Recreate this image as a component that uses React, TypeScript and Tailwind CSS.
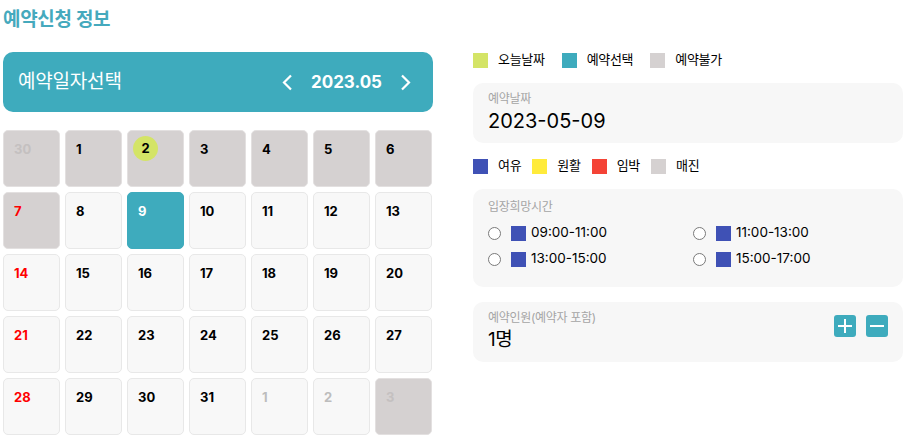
import React from "react";

type Cell = { n: number; kind: "dis" | "norm" | "sel" | "other" | "otherdis"; red?: boolean; today?: boolean };

const rows: Cell[][] = [
  [
    { n: 30, kind: "otherdis" },
    { n: 1, kind: "dis" },
    { n: 2, kind: "dis", today: true },
    { n: 3, kind: "dis" },
    { n: 4, kind: "dis" },
    { n: 5, kind: "dis" },
    { n: 6, kind: "dis" },
  ],
  [
    { n: 7, kind: "dis", red: true },
    { n: 8, kind: "norm" },
    { n: 9, kind: "sel" },
    { n: 10, kind: "norm" },
    { n: 11, kind: "norm" },
    { n: 12, kind: "norm" },
    { n: 13, kind: "norm" },
  ],
  [14, 15, 16, 17, 18, 19, 20].map((n, i) => ({ n, kind: "norm" as const, red: i === 0 })),
  [21, 22, 23, 24, 25, 26, 27].map((n, i) => ({ n, kind: "norm" as const, red: i === 0 })),
  [
    { n: 28, kind: "norm", red: true },
    { n: 29, kind: "norm" },
    { n: 30, kind: "norm" },
    { n: 31, kind: "norm" },
    { n: 1, kind: "other" },
    { n: 2, kind: "other" },
    { n: 3, kind: "otherdis" },
  ],
];

const font = { fontFamily: "Inter, 'Noto Sans CJK KR', sans-serif" };

function DayCell({ c }: { c: Cell }) {
  let box = "bg-[#f8f8f8] border border-[#e8e8e8]";
  if (c.kind === "dis" || c.kind === "otherdis") box = "bg-[#d5d1d1] border border-[#e3e0e0]";
  if (c.kind === "sel") box = "bg-[#3eabbd] border border-[#3eabbd]";
  let color = "text-black";
  if (c.red) color = "text-[#ff0000]";
  if (c.kind === "sel") color = "text-white";
  if (c.kind === "other") color = "text-[#bdbdbd]";
  if (c.kind === "otherdis") color = "text-[#c4c0c0]";
  return (
    <div className={`h-[57px] rounded-[5px] ${box}`}>
      {c.today ? (
        <div className="ml-[5px] mt-[5px] w-[25px] h-[25px] rounded-full bg-[#d4e466] flex items-center justify-center text-[13px] font-bold text-black leading-none">
          {c.n}
        </div>
      ) : (
        <div className={`pl-[10px] pt-[10px] text-[13px] font-bold leading-[16px] ${color}`}>{c.n}</div>
      )}
    </div>
  );
}

function Sq({ color }: { color: string }) {
  return <span className={`inline-block w-[15px] h-[15px] ${color}`} />;
}

function Radio() {
  return <span className="inline-block w-[13px] h-[13px] rounded-full border border-[#7a7a7a] bg-white" />;
}

function Slot({ t }: { t: string }) {
  return (
    <div className="flex items-center h-[26px]">
      <Radio />
      <span className="ml-[10px] flex">
        <Sq color="bg-[#3f51b5]" />
      </span>
      <span className="ml-[5px] text-[13.5px] text-black leading-none">{t}</span>
    </div>
  );
}

export default function App() {
  return (
    <div className="w-[906px] h-[436px] bg-white overflow-hidden flex" style={font}>
      <div className="w-[433px] pl-[3px] flex flex-col">
        <div className="mt-[6px] h-[28px] leading-[28px] text-[19px] font-bold text-[#45a9bd] tracking-[-0.3px]">
          예약신청 정보
        </div>
        <div className="mt-[18px] h-[60px] rounded-[10px] bg-[#3eabbd] flex items-center pl-[15px] pr-[21px]">
          <span className="text-white text-[19px] tracking-[-0.2px]">예약일자선택</span>
          <div className="ml-auto flex items-center">
            <svg width="12" height="17" viewBox="0 0 12 17" fill="none">
              <polyline points="10,1.5 3,8.5 10,15.5" stroke="white" strokeWidth="2.2" />
            </svg>
            <span className="mx-[18px] text-white text-[17px] font-bold leading-none">2023.05</span>
            <svg width="12" height="17" viewBox="0 0 12 17" fill="none">
              <polyline points="2,1.5 9,8.5 2,15.5" stroke="white" strokeWidth="2.2" />
            </svg>
          </div>
        </div>
        <div className="mt-[18px] grid grid-cols-7 gap-[5px] w-[429px]">
          {rows.flat().map((c, i) => (
            <DayCell key={i} c={c} />
          ))}
        </div>
      </div>
      <div className="ml-[40px] w-[430px] pt-[52px] flex flex-col">
        <div className="h-[16px] flex items-center text-[13px] text-black tracking-[-0.3px]">
          <Sq color="bg-[#d4e466]" />
          <span className="ml-[10px]">오늘날짜</span>
          <span className="ml-[17px] flex"><Sq color="bg-[#3eabbd]" /></span>
          <span className="ml-[10px]">예약선택</span>
          <span className="ml-[17px] flex"><Sq color="bg-[#d5d1d1]" /></span>
          <span className="ml-[10px]">예약불가</span>
        </div>
        <div className="mt-[15px] h-[60px] rounded-[10px] bg-[#f7f7f7] pl-[15px] pt-[8px]">
          <div className="text-[12px] leading-[16px] text-[#a5a5a5] tracking-[-0.3px]">예약날짜</div>
          <div className="mt-[2px] text-[20px] leading-[24px] text-black">2023-05-09</div>
        </div>
        <div className="mt-[15px] h-[16px] flex items-center text-[13px] text-black tracking-[-0.3px]">
          <Sq color="bg-[#3f51b5]" />
          <span className="ml-[10px]">여유</span>
          <span className="ml-[11px] flex"><Sq color="bg-[#ffeb3b]" /></span>
          <span className="ml-[10px]">원활</span>
          <span className="ml-[11px] flex"><Sq color="bg-[#f44336]" /></span>
          <span className="ml-[10px]">임박</span>
          <span className="ml-[11px] flex"><Sq color="bg-[#d5d1d1]" /></span>
          <span className="ml-[10px]">매진</span>
        </div>
        <div className="mt-[15px] h-[98px] rounded-[10px] bg-[#f7f7f7] pl-[15px] pt-[10px]">
          <div className="text-[12px] leading-[16px] text-[#a5a5a5] tracking-[-0.3px]">입장희망시간</div>
          <div className="mt-[5px] grid grid-cols-[205px_1fr]">
            <Slot t="09:00-11:00" />
            <Slot t="11:00-13:00" />
            <Slot t="13:00-15:00" />
            <Slot t="15:00-17:00" />
          </div>
        </div>
        <div className="mt-[15px] h-[60px] rounded-[10px] bg-[#f7f7f7] pl-[15px] pr-[15px] flex items-center">
          <div className="flex flex-col -mt-[2px]">
            <div className="text-[12px] leading-[16px] text-[#a5a5a5] tracking-[-0.3px]">예약인원(예약자 포함)</div>
            <div className="mt-[2px] text-[19px] leading-[24px] text-black tracking-[-0.5px]">1명</div>
          </div>
          <div className="ml-auto flex items-center gap-[10px] -mt-[12px]">
            <div className="w-[22px] h-[22px] rounded-[3px] bg-[#3eabbd] flex items-center justify-center">
              <svg width="14" height="14" viewBox="0 0 14 14">
                <rect x="6" y="0" width="2" height="14" fill="white" />
                <rect x="0" y="6" width="14" height="2" fill="white" />
              </svg>
            </div>
            <div className="w-[22px] h-[22px] rounded-[3px] bg-[#3eabbd] flex items-center justify-center">
              <svg width="14" height="14" viewBox="0 0 14 14">
                <rect x="0" y="6" width="14" height="2" fill="white" />
              </svg>
            </div>
          </div>
        </div>
      </div>
    </div>
  );
}
